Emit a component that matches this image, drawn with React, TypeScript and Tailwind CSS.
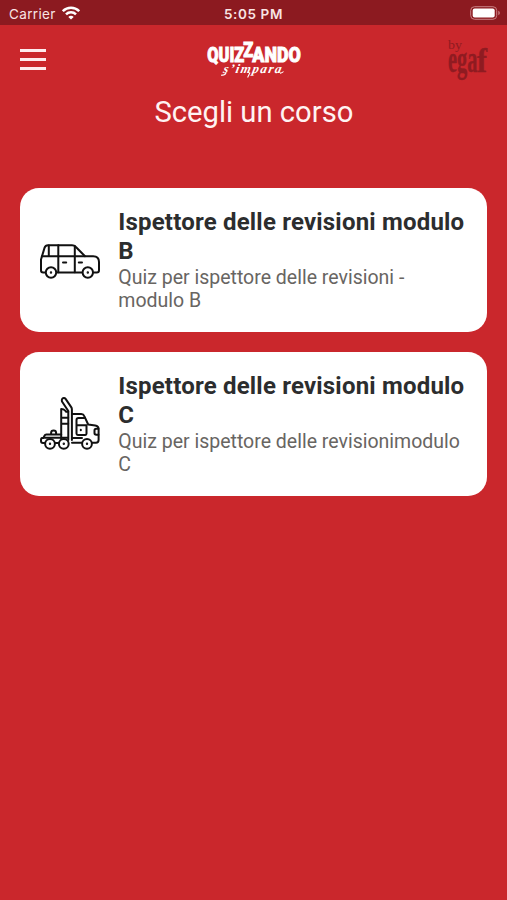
import type { ReactNode } from "react";

function StatusBar() {
  return (
    <div className="grid h-[25px] grid-cols-3 items-center bg-[#8c1a20] font-['Inter',sans-serif] text-[#f8e4e4]">
      <div className="flex items-center gap-[6px] pl-[9px] pt-[3px]">
        <span className="text-[13.5px] leading-5 tracking-[0.35px]">Carrier</span>
        <svg width="18" height="14" viewBox="0 0 18 14" fill="none" stroke="#fff" strokeWidth="2.5" className="-mt-[2px]">
          <path d="M.8 5.2C5.4.6 12.6.6 17.2 5.2M4 8.4c2.8-2.8 7.2-2.8 10 0" />
          <path d="M9 13.6l-2.7-2.7c1.5-1.4 3.9-1.4 5.4 0z" fill="#fff" stroke="none" />
        </svg>
      </div>
      <div className="pt-[3px] text-center text-[13.5px] font-semibold leading-5 tracking-[0.6px]">5:05 PM</div>
      <div className="flex justify-end pr-[6px] pt-[1px]">
        <svg width="31" height="14" viewBox="0 0 31 14">
          <rect x=".7" y=".7" width="26" height="12.6" rx="3.8" fill="none" stroke="#c98084" strokeWidth="1" />
          <rect x="2.7" y="2.6" width="22" height="8.8" rx="2" fill="#fff" />
          <path d="M28.3 4.8c2 .7 2 3.7 0 4.4z" fill="#c98084" />
        </svg>
      </div>
    </div>
  );
}

function QuizzandoLogo() {
  return (
    <svg width="98" height="40" viewBox="0 0 98 40" fill="#fff" className="overflow-visible" aria-label="Quizzando s'impara">
      <g fontFamily="Roboto, sans-serif" fontWeight="900" stroke="#fff" strokeWidth=".9">
        <text x="1.3" y="22.8" fontSize="20.5" textLength="37" lengthAdjust="spacingAndGlyphs">QUIZ</text>
        <text x="37.3" y="17.9" fontSize="20.5" textLength="10" lengthAdjust="spacingAndGlyphs">Z</text>
        <text x="46.3" y="22.8" fontSize="20.5" textLength="48.5" lengthAdjust="spacingAndGlyphs">ANDO</text>
      </g>
      <text x="17" y="34.5" fontFamily="'Liberation Serif', serif" fontStyle="italic" fontWeight="700" fontSize="13" textLength="58" lengthAdjust="spacing" transform="translate(7 0) skewX(-12)">s’impara</text>
      <path d="M15 36.3q4 0 5-2.3M74 34.1q2 .2 3.5-1.6M44 33.5l-2.4 5" fill="none" stroke="#fff" strokeWidth="1.1" />
    </svg>
  );
}

function EgafLogo() {
  return (
    <svg width="44" height="44" viewBox="0 0 44 44" fill="#8f1b21" fontFamily="'Liberation Serif', serif" className="overflow-visible" aria-label="by egaf">
      <text x="2" y="11" fontSize="13.5" textLength="14" lengthAdjust="spacingAndGlyphs">by</text>
      <g fontWeight="700" stroke="#8f1b21" strokeWidth=".4">
        <text x="2" y="34" fontSize="37" textLength="29.5" lengthAdjust="spacingAndGlyphs">ega</text>
        <text x="31" y="34" fontSize="33" textLength="10" lengthAdjust="spacingAndGlyphs">f</text>
      </g>
    </svg>
  );
}

function CarIcon() {
  return (
    <svg width="60" height="36" viewBox="0 0 60 36" fill="none" stroke="#111" strokeWidth="2" strokeLinejoin="round" strokeLinecap="round" className="overflow-visible">
      <path d="M5.5 28.5H3.2Q1 28.5 1 26.3V15.5L4.6 3.6Q5.4 1.2 8 1.2h24q2.3 0 3.9 1.8L45 12.3h8.2q5.8 0 5.8 5.8v8.2q0 2.2-2.2 2.2h-3M16.5 28.5H42" />
      <path d="M1.8 12.3H45M8.8 1.5v10.8M18.3 1.3v27M34.8 2v26.3M23 18.4h3.2M38.8 18.4H42" />
      <circle cx="11" cy="28.5" r="5.2" fill="#fff" />
      <circle cx="47.8" cy="28.5" r="5.2" fill="#fff" />
      <circle cx="11" cy="28.5" r=".5" fill="#111" strokeWidth="1.4" />
      <circle cx="47.8" cy="28.5" r=".5" fill="#111" strokeWidth="1.4" />
    </svg>
  );
}

function TruckIcon() {
  return (
    <svg width="60" height="54" viewBox="0 0 60 54" fill="none" stroke="#111" strokeWidth="2" strokeLinejoin="round" strokeLinecap="round" className="overflow-visible">
      <path d="M28.3 43V14L22 4.5Q21.2 1.5 23.8 1.1q1.1-.1 1.8.8l5.6 8.2q.7 1 .7 2.3V43" />
      <path d="M21.2 42V12q2.5 0 4 1.6l1 1.2h2M21.2 20.8h7M21.2 26.8h7" />
      <path d="M32 17h9.2q2.3 0 3.1 2.1l3.9 8.4 7 .9q3.4.5 3.4 3.7v11q0 2.6-2.6 2.6h-3.5M32 45.8h10M32 41h10" />
      <path d="M46 28.3h-9.5v-5.4q0-2 2-2h6M36.5 28.3v8.3q0 1.3 1.3 1.3h7.5q1.2 0 1.2-1.3v-8.3M40.8 32.8v.5" />
      <path d="M58.4 31.8h-2.2q-1.7 0-1.7 1.7V36q0 1.7 1.7 1.7h2.2" />
      <path d="M3.4 41l1-2.2q.6-1.4 2-1.4h14.8M7 37.4h4.1v-1.6q0-2.4 2.5-2.4t2.5 2.4v1.6M4.5 46H3q-2 0-2-2v-1q0-2.2 2.2-2.2H28M15.5 46h3" />
      <circle cx="10" cy="46.8" r="4.9" fill="#fff" />
      <circle cx="23.8" cy="46.8" r="4.9" fill="#fff" />
      <circle cx="47" cy="46.8" r="4.9" fill="#fff" />
      <circle cx="10" cy="46.8" r=".5" fill="#111" strokeWidth="1.4" />
      <circle cx="23.8" cy="46.8" r=".5" fill="#111" strokeWidth="1.4" />
      <circle cx="47" cy="46.8" r=".5" fill="#111" strokeWidth="1.4" />
    </svg>
  );
}

function CourseCard({ icon, title, description }: { icon: ReactNode; title: string; description: string }) {
  return (
    <button className="flex h-36 w-full items-center rounded-[19px] bg-white pl-[19.6px] text-left">
      <span className="w-[60px] shrink-0">{icon}</span>
      <span className="ml-[18.3px] w-[354px]">
        <span className="block text-[24px] font-bold leading-[29px] tracking-[0.19px] text-[#2c2d2e]">{title}</span>
        <span className="block text-[19.5px] leading-[23px] text-[#686562]">{description}</span>
      </span>
    </button>
  );
}

export default function App() {
  return (
    <div className="min-h-[900px] w-full bg-[#ca272c] font-['Roboto',sans-serif]">
      <StatusBar />
      <header className="flex h-[60px] items-start justify-between pl-5 pr-[17px]">
        <button aria-label="Menu" className="mt-6 flex w-[60px] flex-col gap-[6px]">
          <span className="h-[3px] w-[26px] bg-[#ffecee]" />
          <span className="h-[3px] w-[26px] bg-[#ffecee]" />
          <span className="h-[3px] w-[26px] bg-[#ffecee]" />
        </button>
        <div className="mt-[14px]"><QuizzandoLogo /></div>
        <div className="mt-[13px] flex w-[60px] justify-end"><EgafLogo /></div>
      </header>
      <main className="pl-[20.4px] pr-[19.6px]">
        <h1 className="pt-[10px] text-center text-[29.2px] leading-[34px] text-[#fff3f3]">Scegli un corso</h1>
        <div className="mt-[59px] flex flex-col gap-[19.5px]">
          <CourseCard icon={<div className="pt-[3px]"><CarIcon /></div>} title="Ispettore delle revisioni modulo B" description="Quiz per ispettore delle revisioni - modulo B" />
          <CourseCard icon={<TruckIcon />} title="Ispettore delle revisioni modulo C" description="Quiz per ispettore delle revisionimodulo C" />
        </div>
      </main>
    </div>
  );
}
